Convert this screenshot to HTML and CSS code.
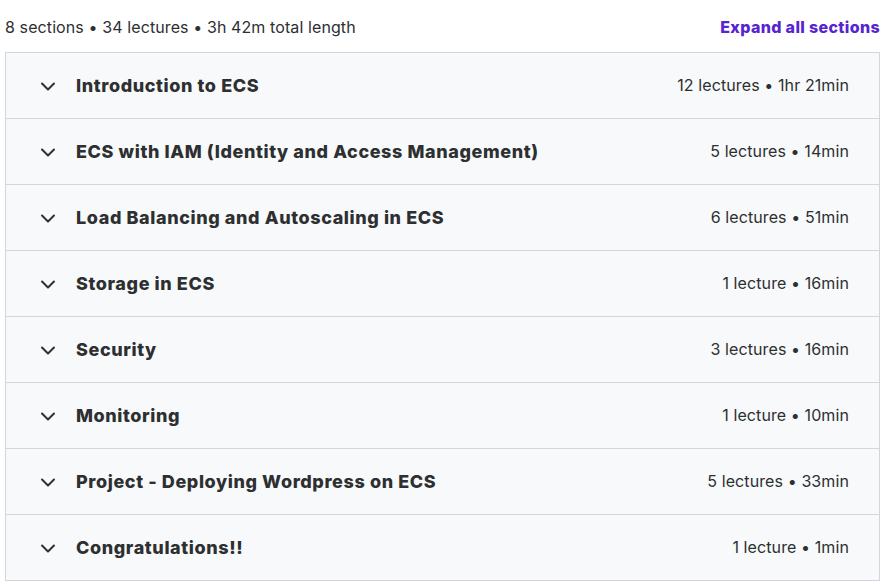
FILE: index.html
```html
<!DOCTYPE html>
<html lang="en">
<head>
    <meta charset="UTF-8">
    <meta name="viewport" content="width=device-width, initial-scale=1.0">
    <title>Course content</title>
    <link rel="stylesheet" href="styles.css">
</head>
<body>
    <div class="curriculum">
        <div class="curriculum-header">
            <span class="summary">8 sections • 34 lectures • 3h 42m total length</span>
            <button class="expand-all">Expand all sections</button>
        </div>
        <div class="sections">
            <div class="section">
                <svg class="chevron" viewBox="0 0 24 24"><path d="M6 9.5l6 6 6-6"/></svg>
                <span class="section-title">Introduction to ECS</span>
                <span class="section-meta">12 lectures • 1hr 21min</span>
            </div>
            <div class="section">
                <svg class="chevron" viewBox="0 0 24 24"><path d="M6 9.5l6 6 6-6"/></svg>
                <span class="section-title">ECS with IAM (Identity and Access Management)</span>
                <span class="section-meta">5 lectures • 14min</span>
            </div>
            <div class="section">
                <svg class="chevron" viewBox="0 0 24 24"><path d="M6 9.5l6 6 6-6"/></svg>
                <span class="section-title">Load Balancing and Autoscaling in ECS</span>
                <span class="section-meta">6 lectures • 51min</span>
            </div>
            <div class="section">
                <svg class="chevron" viewBox="0 0 24 24"><path d="M6 9.5l6 6 6-6"/></svg>
                <span class="section-title">Storage in ECS</span>
                <span class="section-meta">1 lecture • 16min</span>
            </div>
            <div class="section">
                <svg class="chevron" viewBox="0 0 24 24"><path d="M6 9.5l6 6 6-6"/></svg>
                <span class="section-title">Security</span>
                <span class="section-meta">3 lectures • 16min</span>
            </div>
            <div class="section">
                <svg class="chevron" viewBox="0 0 24 24"><path d="M6 9.5l6 6 6-6"/></svg>
                <span class="section-title">Monitoring</span>
                <span class="section-meta">1 lecture • 10min</span>
            </div>
            <div class="section">
                <svg class="chevron" viewBox="0 0 24 24"><path d="M6 9.5l6 6 6-6"/></svg>
                <span class="section-title">Project - Deploying Wordpress on ECS</span>
                <span class="section-meta">5 lectures • 33min</span>
            </div>
            <div class="section">
                <svg class="chevron" viewBox="0 0 24 24"><path d="M6 9.5l6 6 6-6"/></svg>
                <span class="section-title">Congratulations!!</span>
                <span class="section-meta">1 lecture • 1min</span>
            </div>
        </div>
    </div>
</body>
</html>
```

FILE: styles.css
```css
body {
    margin: 0;
    background: #ffffff;
    color: #2d2f31;
    font-family: Inter, "Liberation Sans", sans-serif;
}
.curriculum {
    width: 875px;
    padding-left: 5px;
}
.curriculum-header {
    height: 52px;
    padding-top: 2px;
    box-sizing: border-box;
    display: flex;
    align-items: center;
    justify-content: space-between;
}
.summary {
    font-size: 16px;
    letter-spacing: 0.1px;
    color: #2d2f31;
}
.expand-all {
    background: none;
    border: none;
    padding: 0;
    font-family: inherit;
    font-size: 16px;
    font-weight: 800;
    letter-spacing: 0.35px;
    color: #5624d0;
    cursor: pointer;
}
.sections {
    border: 1px solid #d1d7dc;
    border-bottom: none;
}
.section {
    height: 65px;
    display: flex;
    align-items: center;
    padding: 0 30px 0 30px;
    background: #f7f9fa;
    border-bottom: 1px solid #d1d7dc;
}
.chevron {
    width: 24px;
    height: 24px;
    fill: none;
    stroke: #2d2f31;
    stroke-width: 2;
    stroke-linecap: round;
    stroke-linejoin: round;
    margin-right: 16px;
}
.section-title {
    flex: 1;
    font-size: 18px;
    font-weight: 800;
    letter-spacing: 0.6px;
}
.section-meta {
    font-size: 16px;
    letter-spacing: 0.1px;
    padding-bottom: 2px;
}
```
